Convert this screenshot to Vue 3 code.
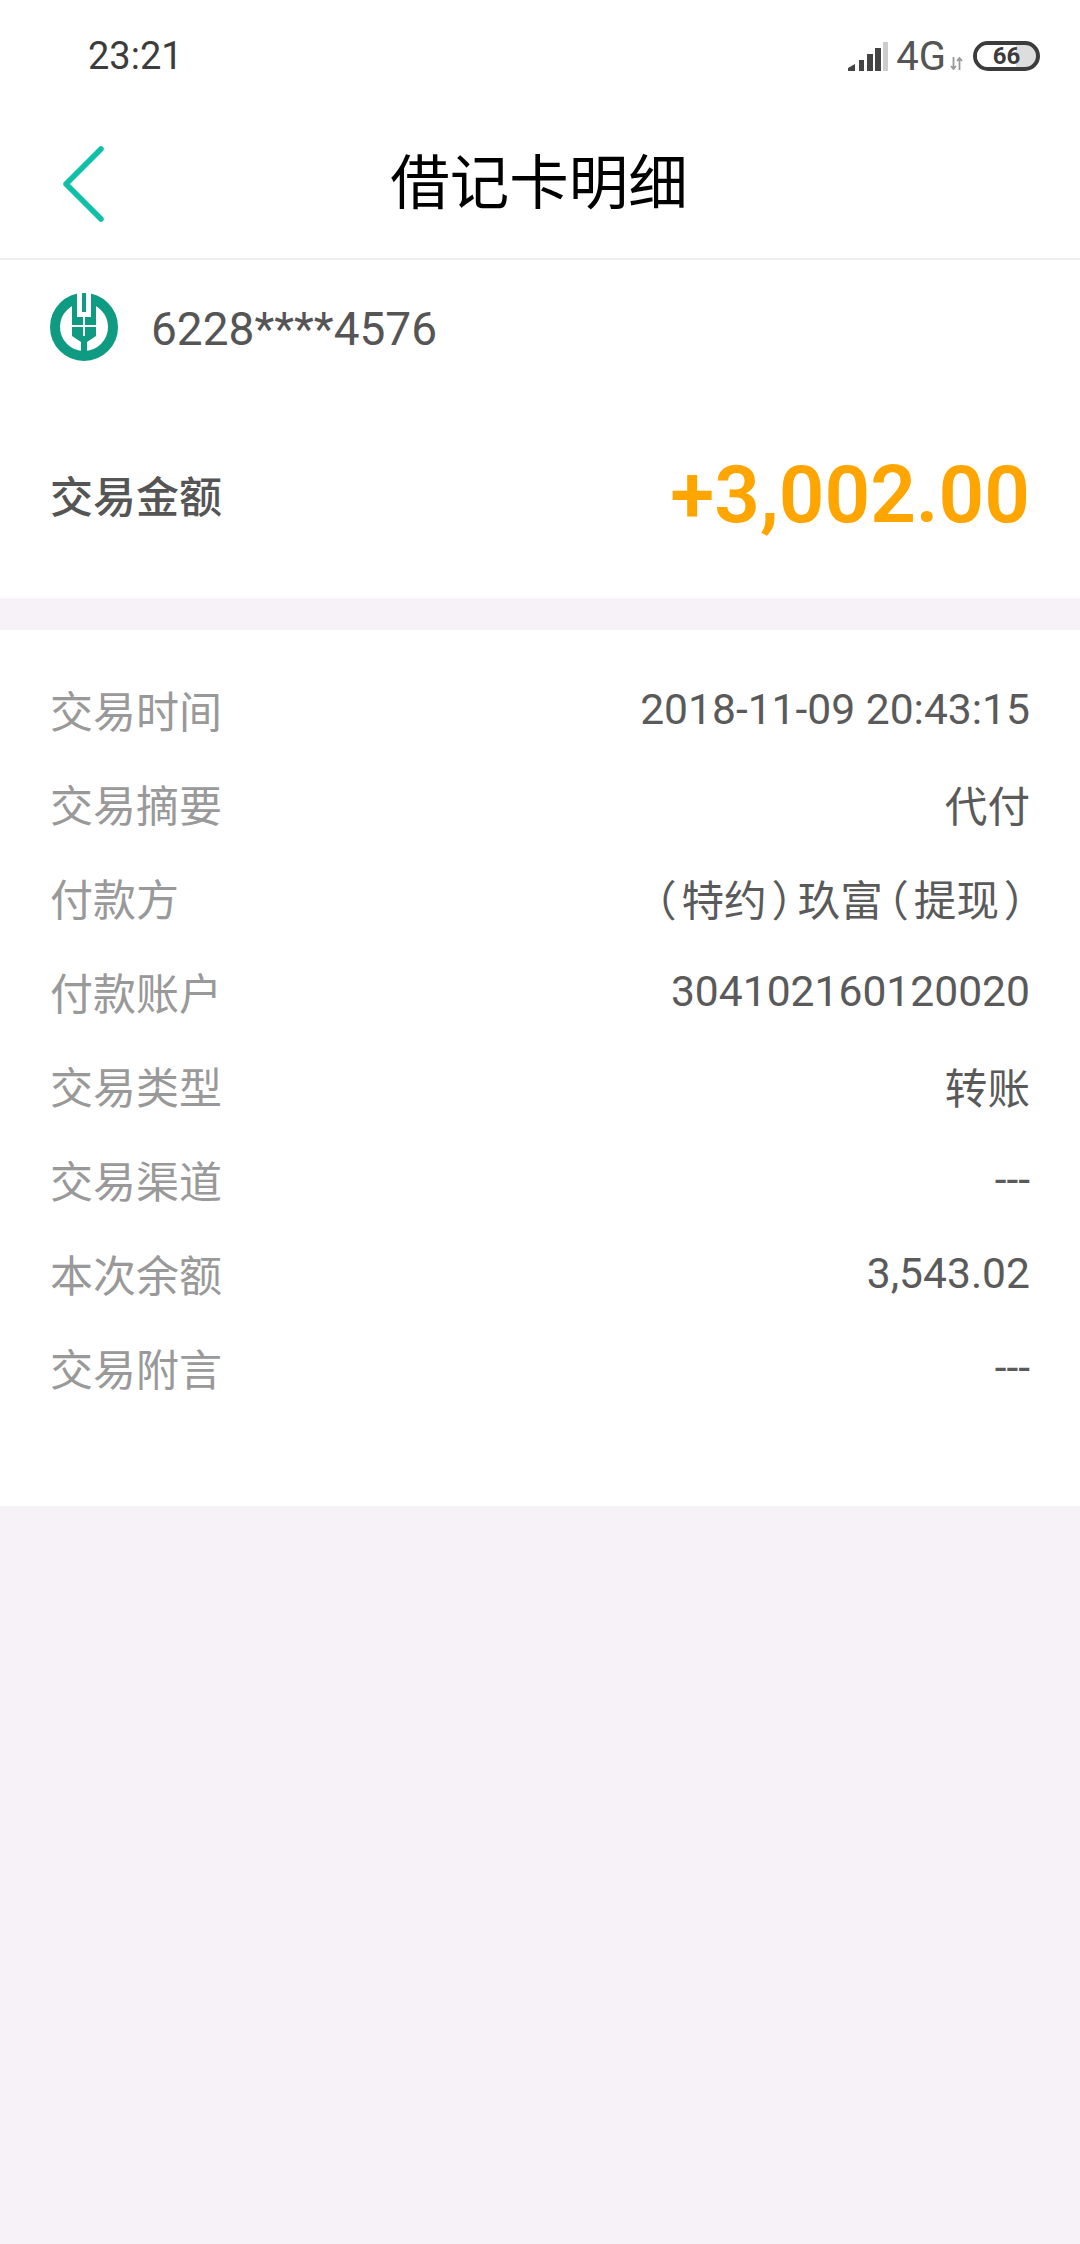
<template>
  <div class="page">
    <!-- 状态栏 -->
    <div class="status-bar">
      <span class="time">23:21</span>
      <div class="status-right">
        <svg class="signal" width="40" height="29" viewBox="0 0 40 29">
          <path d="M0 29v-3l7-4v7z" fill="#444" />
          <rect x="11" y="18" width="5" height="11" fill="#444" />
          <rect x="19" y="12" width="6" height="17" fill="#444" />
          <rect x="27" y="6" width="6" height="23" fill="#444" />
          <rect x="35" y="0" width="5" height="29" fill="#ccc" />
        </svg>
        <span class="net">4G</span>
        <svg class="arrows" width="13" height="13" viewBox="0 0 13 13">
          <path d="M3.5 0v12M1 9l2.500 3L6 9" stroke="#999" stroke-width="1.800" fill="none" />
          <path d="M9.500 13V1M7 4l2.500-3L12 4" stroke="#999" stroke-width="1.800" fill="none" />
        </svg>
        <div class="battery">
          <div class="battery-fill"></div>
          <span class="battery-num">66</span>
        </div>
      </div>
    </div>

    <!-- 标题栏 -->
    <div class="header">
      <svg class="back" width="44" height="76" viewBox="0 0 44 76">
        <path d="M39 3 4 38l35 35" stroke="#0fc0a8" stroke-width="5.500" fill="none" stroke-linecap="round" stroke-linejoin="round" />
      </svg>
      <h1 class="title">借记卡明细</h1>
    </div>

    <!-- 金额 -->
    <section class="card summary">
      <div class="bank">
        <svg class="bank-logo" width="68" height="68" viewBox="0 0 68 68">
          <circle cx="34" cy="34" r="29" fill="none" stroke="#0f9b82" stroke-width="10" />
          <path d="M22 2h24v41l-9 6v17h-6V49l-9-6z" fill="#0f9b82" />
          <path d="M27 0h5v19h4V0h5v24H27z" fill="#fff" />
          <path d="M22 33h24M34 24v19" stroke="#fff" stroke-width="2" />
        </svg>
        <span class="card-no">6228****4576</span>
      </div>
      <div class="amount-row">
        <span class="amount-label">交易金额</span>
        <span class="amount">+3,002.00</span>
      </div>
    </section>

    <!-- 明细 -->
    <section class="card details">
      <div v-for="row in rows" :key="row.label" class="row">
        <span class="label">{{ row.label }}</span>
        <span class="value">
          <template v-for="(part, i) in splitParens(row.value)" :key="i">
            <span v-if="part === '（' || part === '）'" class="paren">{{ part }}</span>
            <template v-else>{{ part }}</template>
          </template>
        </span>
      </div>
    </section>
  </div>
</template>

<script setup>
const rows = [
  { label: '交易时间', value: '2018-11-09 20:43:15' },
  { label: '交易摘要', value: '代付' },
  { label: '付款方', value: '（特约）玖富（提现）' },
  { label: '付款账户', value: '304102160120020' },
  { label: '交易类型', value: '转账' },
  { label: '交易渠道', value: '---' },
  { label: '本次余额', value: '3,543.02' },
  { label: '交易附言', value: '---' }
]

/* 全角括号单独排版 */
const splitParens = (text) => text.split(/([（）])/).filter(Boolean)
</script>

<style>
html,
body {
  margin: 0;
  background: #f6f2f8;
}
</style>

<style scoped>
.page {
  width: 1080px;
  height: 2244px;
  overflow: hidden;
  background: #f6f2f8;
  font-family: Roboto, "Noto Sans CJK SC", sans-serif;
}

/* 状态栏 */
.status-bar {
  height: 84px;
  padding: 28px 40px 0 88px;
  background: #fff;
  display: flex;
  align-items: center;
  justify-content: space-between;
  box-sizing: border-box;
}

.time {
  font-size: 38px;
  color: #3c3c3c;
}

.status-right {
  display: flex;
  align-items: center;
}

.signal {
  margin-right: 8px;
}

.net {
  font-size: 40px;
  color: #555;
}

.arrows {
  margin: 14px 10px 0 4px;
}

.battery {
  position: relative;
  width: 59px;
  height: 22px;
  border: 4px solid #3c3c3c;
  border-radius: 16px;
  overflow: hidden;
  display: flex;
  align-items: center;
  justify-content: center;
  background: #ddd;
}

.battery-fill {
  position: absolute;
  left: 0;
  top: 0;
  bottom: 0;
  width: 66%;
  background: #fff;
}

.battery-num {
  position: relative;
  font-size: 24px;
  font-weight: 700;
  color: #3c3c3c;
}

/* 标题栏 */
.header {
  position: relative;
  height: 174px;
  background: #fff;
  border-bottom: 2px solid #eeeeee;
  display: flex;
  align-items: center;
  justify-content: center;
}

.back {
  position: absolute;
  left: 62px;
  top: 62px;
}

.title {
  margin: 14px 2px 0 0;
  font-size: 59.5px;
  font-weight: 400;
  color: #000;
}

.card {
  background: #fff;
}

.summary {
  height: 338px;
  padding: 0 50px;
  box-sizing: border-box;
  margin-bottom: 32px;
}

.bank {
  height: 134px;
  display: flex;
  align-items: center;
}

.bank-logo {
  margin-right: 33px;
}

.card-no {
  margin-top: 4px;
  font-size: 46px;
  color: #555;
}

.amount-row {
  margin-top: 54px;
  display: flex;
  align-items: center;
  justify-content: space-between;
}

.amount-label {
  margin-top: -3px;
  font-size: 43px;
  font-weight: 500;
  color: #555;
}

.amount {
  font-size: 80px;
  font-weight: 600;
  color: #ffa500;
}

.details {
  height: 876px;
  padding: 32px 50px 0;
  box-sizing: border-box;
}

.row {
  height: 94px;
  display: flex;
  align-items: center;
  justify-content: space-between;
}

.label {
  font-size: 43px;
  color: #999;
}

.value {
  font-size: 42.6px;
  color: #5a5a5a;
}

.paren {
  display: inline-block;
  width: 31px;
  text-align: center;
  font-feature-settings: "halt";
}
</style>
